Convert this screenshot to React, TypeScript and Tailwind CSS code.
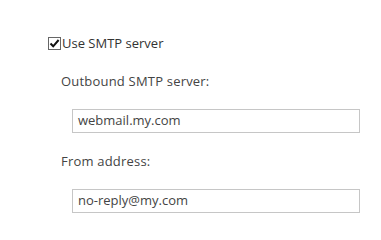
export default function App() {
  return (
    <div className="w-[381px] h-[240px] bg-white pt-[37px] pl-[48px] font-['Open_Sans',sans-serif] text-[13px] text-[#444]">
      <label className="flex items-center h-[13px] gap-[1px] text-[#333]">
        <span className="w-[13px] h-[13px] border border-[#666] bg-white flex items-center justify-center">
          <svg width="11" height="11" viewBox="0 0 11 11">
            <path d="M1.5 5.5 L4.2 8.3 L9.6 2" fill="none" stroke="#111" strokeWidth="2" />
          </svg>
        </span>
        <span className="leading-none">Use SMTP server</span>
      </label>
      <div className="pl-[13px] pt-[23px] flex flex-col">
        <span className="leading-[16px] tracking-[0.2px]">Outbound SMTP server:</span>
        <div className="pl-[11px] pt-[20px]">
          <div className="w-[288px] h-[24px] border border-[#c6c6c6] flex items-center px-[5px] text-[#444]">
            webmail.my.com
          </div>
        </div>
        <span className="leading-[16px] pt-[20px] tracking-[0.2px]">From address:</span>
        <div className="pl-[11px] pt-[20px]">
          <div className="w-[288px] h-[24px] border border-[#c6c6c6] flex items-center px-[5px] text-[#444]">
            no-reply@my.com
          </div>
        </div>
      </div>
    </div>
  );
}
